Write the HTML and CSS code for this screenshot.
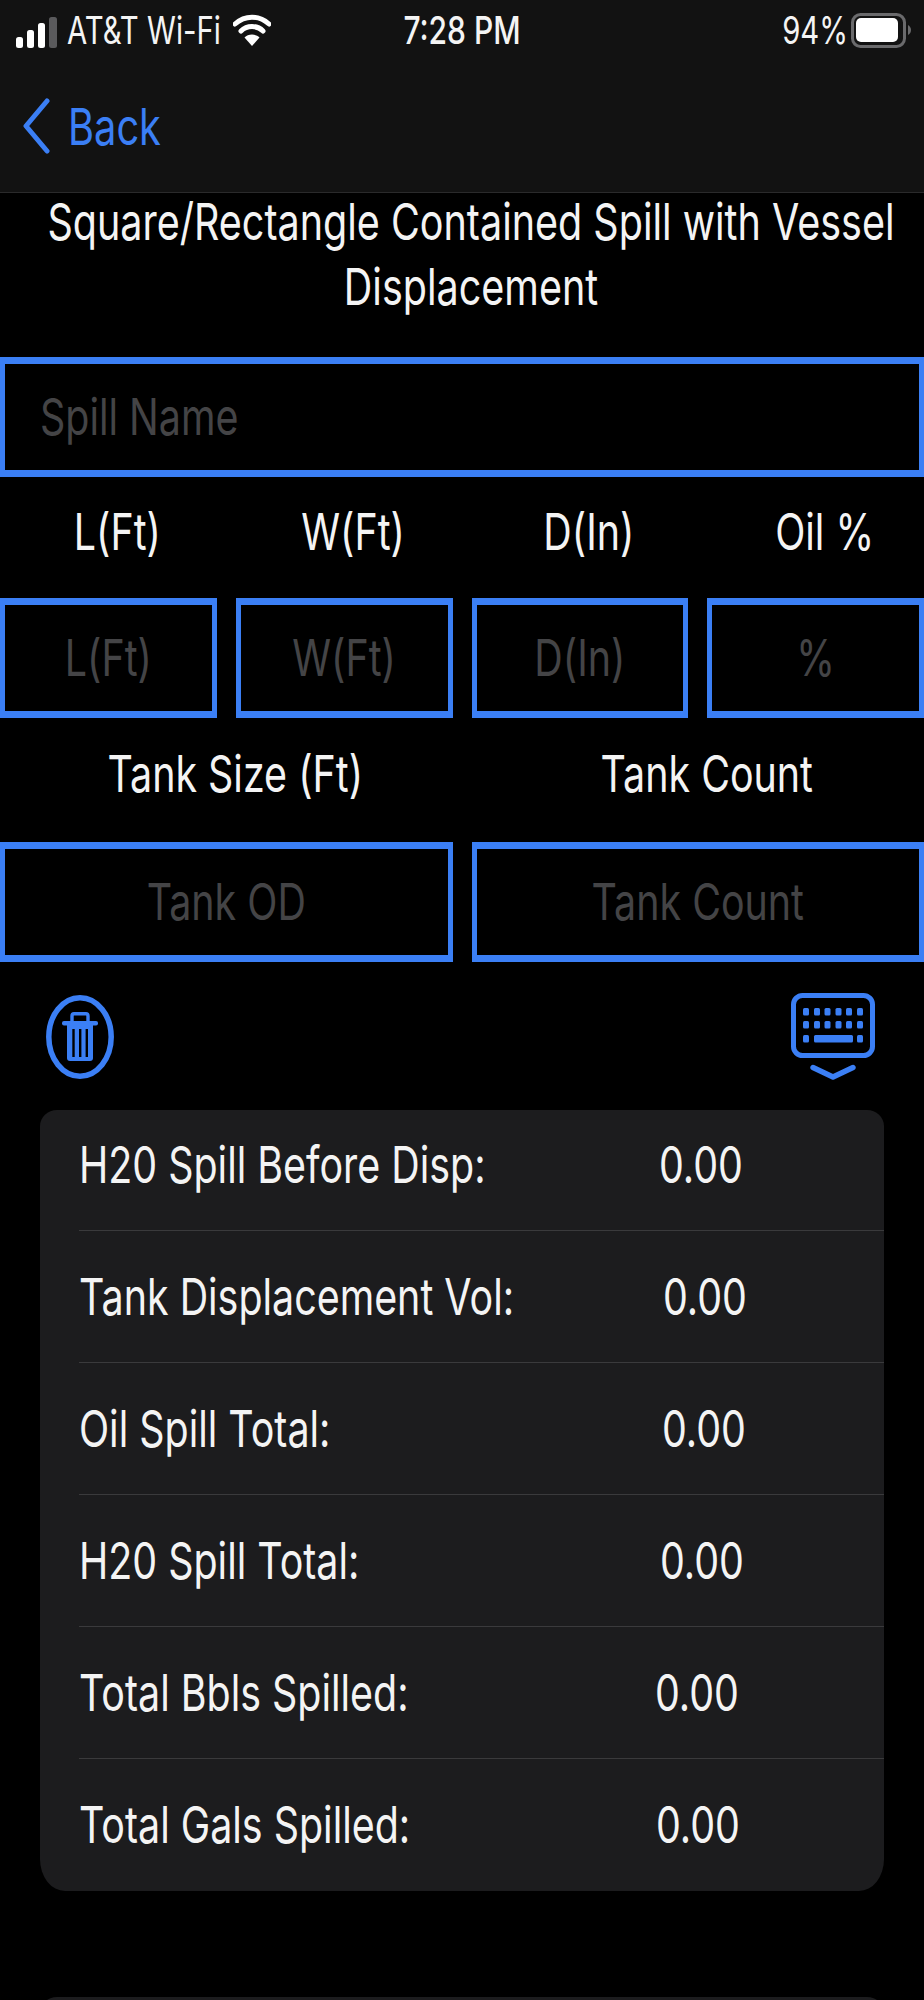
FILE: index.html
```html
<!DOCTYPE html>
<html lang="en">

<head>
    <meta charset="UTF-8">
    <meta name="viewport" content="width=device-width, initial-scale=1.0">
    <title>Contained Spill</title>
    <link rel="stylesheet" href="styles.css">
</head>

<body>
    <div class="screen">
        <header class="topbar">
            <div class="status">
                <div class="status-left">
                    <svg class="signal" viewBox="0 0 41 31">
                        <rect x="0" y="20" width="7" height="11" rx="2.5" fill="#fff"/>
                        <rect x="11" y="13" width="7" height="18" rx="2.5" fill="#fff"/>
                        <rect x="22" y="6" width="7" height="25" rx="2.5" fill="#fff"/>
                        <rect x="33" y="0" width="8" height="31" rx="2.5" fill="#5a5a5c"/>
                    </svg>
                    <span class="tall">AT&amp;T Wi-Fi</span>
                    <svg class="wifi" viewBox="0 0 38 32">
                        <path d="M2 10 C12 1 26 1 36 10" fill="none" stroke="#fff" stroke-width="5" stroke-linecap="round"/>
                        <path d="M8 17 C14 11 24 11 30 17" fill="none" stroke="#fff" stroke-width="5" stroke-linecap="round"/>
                        <path d="M19 32 L11.5 23.5 C15 19.5 23 19.5 26.5 23.5 Z" fill="#fff"/>
                    </svg>
                </div>
                <div class="status-time tall">7:28 PM</div>
                <div class="status-right">
                    <span class="tall">94%</span>
                    <svg class="battery" viewBox="0 0 60 35">
                        <rect x="1.5" y="1.5" width="52" height="32" rx="8" fill="none" stroke="#6a6a6c" stroke-width="3"/>
                        <rect x="5" y="5" width="42" height="24" rx="5" fill="#fff"/>
                        <path d="M57 12 C59 13 60 15 60 17 C60 19 59 21 57 22 Z" fill="#6a6a6c"/>
                    </svg>
                </div>
            </div>
            <div class="nav">
                <svg class="chevron" viewBox="0 0 27 56">
                    <path d="M24 3 L3 28 L24 53" fill="none" stroke="#3b7ff5" stroke-width="5" stroke-linecap="round" stroke-linejoin="round"/>
                </svg>
                <span class="tall">Back</span>
            </div>
        </header>

        <h1 class="title tall">Square/Rectangle Contained Spill with Vessel Displacement</h1>

        <div class="field field-name"><span class="tall">Spill Name</span></div>

        <div class="grid four labels">
            <div class="tall">L(Ft)</div>
            <div class="tall">W(Ft)</div>
            <div class="tall">D(In)</div>
            <div class="tall">Oil %</div>
        </div>
        <div class="grid four">
            <div class="field"><span class="tall">L(Ft)</span></div>
            <div class="field"><span class="tall">W(Ft)</span></div>
            <div class="field"><span class="tall">D(In)</span></div>
            <div class="field"><span class="tall">%</span></div>
        </div>

        <div class="grid two labels labels-tank">
            <div class="tall">Tank Size (Ft)</div>
            <div class="tall">Tank Count</div>
        </div>
        <div class="grid two">
            <div class="field"><span class="tall">Tank OD</span></div>
            <div class="field"><span class="tall">Tank Count</span></div>
        </div>

        <div class="tools">
            <svg class="trash" viewBox="0 0 68 84">
                <ellipse cx="34" cy="42" rx="31.2" ry="39.2" fill="none" stroke="#3b7ff5" stroke-width="5.5"/>
                <rect x="16" y="26" width="36" height="4.4" rx="2" fill="#3b7ff5"/>
                <path d="M26 27 V21 Q26 18.7 28 18.7 H40 Q42 18.7 42 21 V27" fill="none" stroke="#3b7ff5" stroke-width="3.4"/>
                <path d="M21 30 H47 V63 Q47 66 44 66 H24 Q21 66 21 63 Z" fill="#3b7ff5"/>
                <rect x="26.3" y="34" width="2.4" height="28" fill="#000"/>
                <rect x="33" y="34" width="2.4" height="28" fill="#000"/>
                <rect x="39.6" y="34" width="2.4" height="28" fill="#000"/>
            </svg>
            <svg class="keyboard" viewBox="0 0 84 87">
                <rect x="2.5" y="2.5" width="79" height="60" rx="9" fill="none" stroke="#3b7ff5" stroke-width="5"/>
                <g fill="#3b7ff5">
                    <rect x="12" y="15" width="6" height="7.5" rx="1.5"/>
                    <rect x="23" y="15" width="6" height="7.5" rx="1.5"/>
                    <rect x="33.5" y="15" width="6" height="7.5" rx="1.5"/>
                    <rect x="44.5" y="15" width="6" height="7.5" rx="1.5"/>
                    <rect x="55" y="15" width="6" height="7.5" rx="1.5"/>
                    <rect x="66" y="15" width="6" height="7.5" rx="1.5"/>
                    <rect x="12" y="28" width="6" height="7.5" rx="1.5"/>
                    <rect x="23" y="28" width="6" height="7.5" rx="1.5"/>
                    <rect x="33.5" y="28" width="6" height="7.5" rx="1.5"/>
                    <rect x="44.5" y="28" width="6" height="7.5" rx="1.5"/>
                    <rect x="55" y="28" width="6" height="7.5" rx="1.5"/>
                    <rect x="66" y="28" width="6" height="7.5" rx="1.5"/>
                    <rect x="12" y="42" width="6" height="7.5" rx="1.5"/>
                    <rect x="23" y="42" width="39" height="7.5" rx="1.5"/>
                    <rect x="66" y="42" width="6" height="7.5" rx="1.5"/>
                </g>
                <path d="M22 74.5 L42 84 L62 74.5" fill="none" stroke="#3b7ff5" stroke-width="5.4" stroke-linecap="round" stroke-linejoin="round"/>
            </svg>
        </div>

        <div class="results">
            <div class="row"><div class="tall">H20 Spill Before Disp:</div><div class="val tall">0.00</div></div>
            <div class="row"><div class="tall">Tank Displacement Vol:</div><div class="val tall">0.00</div></div>
            <div class="row"><div class="tall">Oil Spill Total:</div><div class="val tall">0.00</div></div>
            <div class="row"><div class="tall">H20 Spill Total:</div><div class="val tall">0.00</div></div>
            <div class="row"><div class="tall">Total Bbls Spilled:</div><div class="val tall">0.00</div></div>
            <div class="row"><div class="tall">Total Gals Spilled:</div><div class="val tall">0.00</div></div>
        </div>

        <div class="next-card"></div>
    </div>
</body>

</html>
```

FILE: styles.css
```css
html,
body {
    margin: 0;
    height: 2000px;
    overflow: hidden;
    background: #000;
}

.screen {
    height: 2000px;
    overflow: hidden;
    font-family: Inter, "Liberation Sans", sans-serif;
    font-size: 39.4px;
    color: #f4f4f4;
}

/* type in this app is condensed, so it is set small and stretched upward */
.tall {
    display: inline-block;
    transform: scaleY(1.282);
}

.topbar {
    height: 192px;
    background: #121212;
    border-bottom: 1px solid #2a2a2b;
}

.status {
    display: grid;
    grid-template-columns: 1fr auto 1fr;
    align-items: center;
    height: 60px;
    font-size: 29.3px;
}

.status-left {
    display: flex;
    align-items: center;
    padding-left: 16px;
}

.signal {
    width: 41px;
    height: 31px;
    margin-right: 10px;
    margin-top: 4px;
}

.wifi {
    width: 38px;
    height: 32px;
    margin-left: 12px;
}

.status-time {
    font-size: 30px;
    font-weight: 500;
}

.status-right {
    display: flex;
    align-items: center;
    justify-content: flex-end;
    padding-right: 13px;
}

.battery {
    width: 60px;
    height: 35px;
    margin-left: 3px;
}

.nav {
    display: flex;
    align-items: center;
    height: 132px;
    padding-left: 23px;
    color: #3b7ff5;
    font-size: 39.8px;
}

.chevron {
    width: 27px;
    height: 56px;
    margin-right: 18px;
}

.title {
    display: block;
    margin: -3px 0 0;
    height: 167px;
    padding: 0 12px 0 30px;
    font-size: 39.5px;
    font-weight: 400;
    line-height: 51px;
    text-align: center;
    transform-origin: top;
}

.grid {
    display: grid;
    column-gap: 19px;
}

.four {
    grid-template-columns: repeat(4, 1fr);
}

.two {
    grid-template-columns: repeat(2, 1fr);
}

.labels {
    height: 121px;
    padding-bottom: 12px;
    box-sizing: border-box;
    align-items: center;
    text-align: center;
}

.labels-tank {
    height: 124px;
}

.labels div {
    padding-left: 18px;
}

.field {
    display: flex;
    align-items: center;
    justify-content: center;
    height: 120px;
    box-sizing: border-box;
    border-style: solid;
    border-width: 7px 5px;
    border-color: #3b7ff5;
    color: #444446;
}

.field-name {
    justify-content: flex-start;
    padding-left: 35px;
}

.tools {
    display: flex;
    align-items: flex-start;
    justify-content: space-between;
    height: 148px;
    padding: 31px 49px 0 46px;
    box-sizing: border-box;
}

.trash {
    width: 68px;
    height: 84px;
    margin-top: 2px;
}

.keyboard {
    width: 84px;
    height: 87px;
}

.results {
    margin-left: 40px;
    width: 844px;
    height: 781px;
    overflow: hidden;
    background: #1c1c1e;
    border-radius: 17px 17px 25px 25px / 16px 16px 32px 32px;
}

.row {
    display: grid;
    grid-template-columns: 580px 1fr;
    align-items: center;
    height: 132px;
    margin-left: 39px;
    box-sizing: border-box;
    border-bottom: 1px solid #3a3a3c;
}

.row:first-child {
    margin-top: -11px;
}

.row:last-child {
    border-bottom: none;
}

.row .tall {
    justify-self: start;
}

/* the value column isn't quite straight in this table */
.row:nth-child(2) .val {
    margin-left: 4px;
}

.row:nth-child(3) .val {
    margin-left: 3px;
}

.row:nth-child(4) .val {
    margin-left: 1px;
}

.row:nth-child(5) .val {
    margin-left: -4px;
}

.row:nth-child(6) .val {
    margin-left: -3px;
}

.next-card {
    margin: 106px 0 0 40px;
    width: 844px;
    height: 60px;
    background: #1c1c1e;
    border-radius: 17px 17px 0 0 / 16px 16px 0 0;
}
```
